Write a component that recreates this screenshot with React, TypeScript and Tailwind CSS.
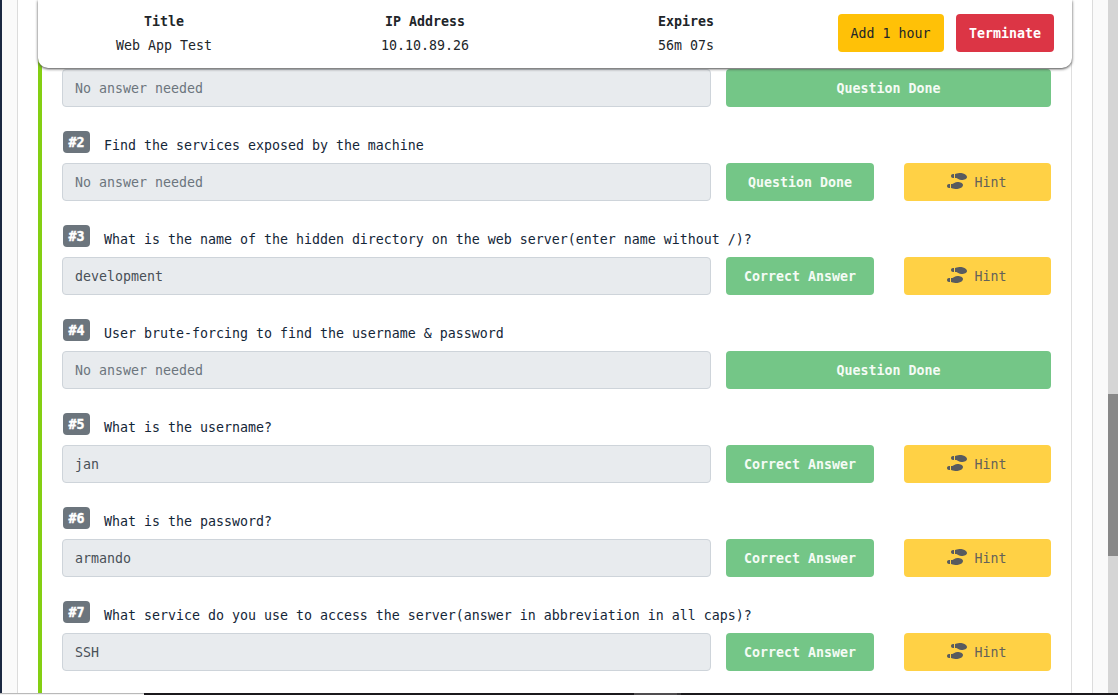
import React from "react";
import { FaShoePrints } from "react-icons/fa";

type Question = {
  id: number;
  text: string;
  answer?: string;
  hint: boolean;
};

const questions: Question[] = [
  { id: 2, text: "Find the services exposed by the machine", hint: true },
  {
    id: 3,
    text: "What is the name of the hidden directory on the web server(enter name without /)?",
    answer: "development",
    hint: true,
  },
  { id: 4, text: "User brute-forcing to find the username & password", hint: false },
  { id: 5, text: "What is the username?", answer: "jan", hint: true },
  { id: 6, text: "What is the password?", answer: "armando", hint: true },
  {
    id: 7,
    text: "What service do you use to access the server(answer in abbreviation in all caps)?",
    answer: "SSH",
    hint: true,
  },
];

function AnswerRow({ answer, hint }: { answer?: string; hint: boolean }) {
  return (
    <div className="flex h-[38px]">
      <div
        className={`flex w-[649px] shrink-0 items-center rounded border border-[#ced4da] bg-[#e8ebee] px-3 pt-0.5 ${
          answer ? "text-[#495057]" : "text-[#6c757d]"
        }`}
      >
        {answer ?? "No answer needed"}
      </div>
      <div
        className={`ml-[15px] flex shrink-0 items-center justify-center rounded bg-[#74c687] pt-0.5 font-bold text-[#f4fbf5] ${
          hint ? "w-[148px]" : "w-[325px]"
        }`}
      >
        {answer ? "Correct Answer" : "Question Done"}
      </div>
      {hint && (
        <div className="ml-[30px] flex w-[147px] shrink-0 items-center justify-center gap-2 rounded bg-[#ffd145] pt-0.5 pr-0.5 text-[#64625a]">
          <FaShoePrints className="mb-1 h-4 w-5 text-[#585b5f]" />
          <span>Hint</span>
        </div>
      )}
    </div>
  );
}

function MachineField({ label, value, width }: { label: string; value: string; width: string }) {
  return (
    <div className={`shrink-0 pt-2.5 text-center leading-6 text-[#212529] ${width}`}>
      <div className="font-bold">{label}</div>
      <div>{value}</div>
    </div>
  );
}

export default function App() {
  return (
    <div className="relative flex h-[695px] w-[1118px] flex-col overflow-hidden bg-white font-['DejaVu_Sans_Mono',monospace] text-[13.29px] leading-6">
      <div className="flex h-[693px] shrink-0">
        <div className="w-[2px] shrink-0 bg-[#1c2942]" />
        <div className="w-4 shrink-0 border-r border-[#dcdcdc] bg-[#fafafa]" />
        <div className="w-5 shrink-0" />
        <main className="w-[1034px] shrink-0 border-r border-l-4 border-r-[#dfdfdf] border-l-[#84cf12] pt-[69px] pl-5">
          <AnswerRow hint={false} />
          {questions.map((q) => (
            <section key={q.id} className="h-[94px] pt-6">
              <div className="flex h-8 items-start pl-px">
                <span className="flex h-[22px] w-[27px] shrink-0 items-center justify-center rounded bg-[#6c757d] pt-0.5 font-bold text-white [-webkit-text-stroke:0.4px_white]">
                  #{q.id}
                </span>
                <span className="mt-[3px] ml-3.5 whitespace-pre text-[#142638]">{q.text}</span>
              </div>
              <AnswerRow answer={q.answer} hint={q.hint} />
            </section>
          ))}
        </main>
        <div className="w-[21px] shrink-0 border-r border-[#dcdcdc]" />
        <div className="w-[15px] shrink-0 bg-[#fafafa]" />
        <div className="w-[10px] shrink-0 bg-[#d5d5d5] pt-[394px]">
          <div className="h-[162px] bg-[#888888]" />
        </div>
      </div>
      <div className="flex h-[2px] shrink-0 bg-[#1b191c]">
        <div className="w-36 border-t border-[#b9b9b9] bg-[#f3f3f3]" />
        <div className="ml-[490px] w-[43px] bg-[#504d50]" />
        <div className="w-1 bg-[#38363a]" />
      </div>

      <header className="absolute top-0 left-[38px] flex h-[68px] w-[1034px] rounded-b-[10px] bg-white shadow-[0_1px_3px_#444]">
        <MachineField label="Title" value="Web App Test" width="w-[252px]" />
        <MachineField label="IP Address" value="10.10.89.26" width="w-[270px]" />
        <MachineField label="Expires" value="56m 07s" width="w-[252px]" />
        <div className="mt-3.5 ml-[26px] flex h-[38px] gap-3">
          <button className="w-[106px] rounded bg-[#ffc107] pt-0.5 pr-px text-[#212529]">Add 1 hour</button>
          <button className="w-[98px] rounded bg-[#dc3545] pt-0.5 font-bold text-white">Terminate</button>
        </div>
      </header>
    </div>
  );
}
